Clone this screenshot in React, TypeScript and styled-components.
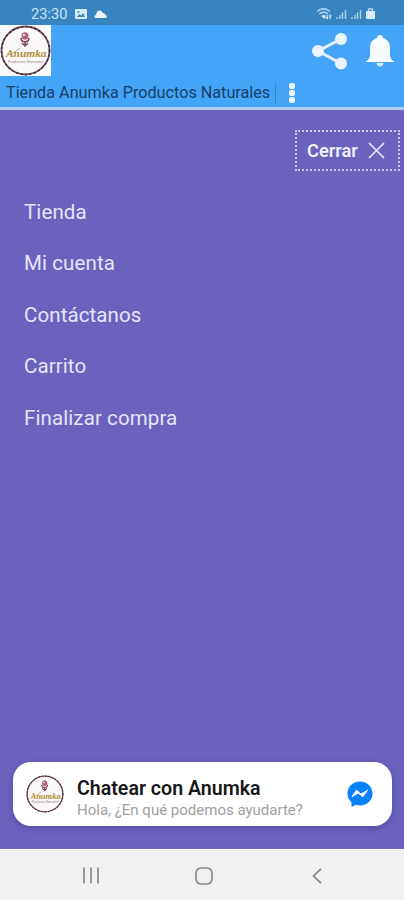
import React from "react";
import styled, { createGlobalStyle } from "styled-components";

const GlobalStyle = createGlobalStyle`
  * { box-sizing: border-box; }
  body { margin: 0; background: #6b62be; font-family: Roboto, sans-serif; }
  button { font-family: inherit; cursor: pointer; }
  svg { display: block; flex: none; }
`;

const Screen = styled.div`
  width: 404px;
  height: 900px;
  display: flex;
  flex-direction: column;
  overflow: hidden;
  background: #6b62be;
`;

const StatusBar = styled.div`
  height: 25px;
  flex: none;
  display: flex;
  align-items: center;
  justify-content: space-between;
  padding: 2px 29px 0 31px;
  background: #3784c0;
  color: #c5e4f8;
`;

const StatusGroup = styled.div<{ $gap: number }>`
  display: flex;
  align-items: center;
  gap: ${(p) => p.$gap}px;
`;

const Clock = styled.span`
  font-size: 14.6px;
  line-height: 18px;
  width: 37px;
  white-space: nowrap;
`;

const Header = styled.header`
  height: 85px;
  flex: none;
  background: #44a5f8;
  border-bottom: 3px solid #b1cdf0;
`;

const HeaderTop = styled.div`
  height: 52px;
  display: flex;
  align-items: center;
  justify-content: space-between;
  padding-right: 10px;
`;

const LogoTile = styled.div`
  width: 51px;
  height: 51px;
  align-self: flex-start;
  background: #fbfafb;
`;

const HeaderActions = styled.div`
  display: flex;
  align-items: center;
  gap: 18px;
`;

const TitleRow = styled.div`
  display: flex;
  align-items: center;
  height: 32px;
  padding-left: 6px;
`;

const Title = styled.h1`
  margin: 0;
  width: 269px;
  font-size: 16.2px;
  font-weight: 400;
  line-height: 20px;
  white-space: nowrap;
  color: #173f67;
`;

const Divider = styled.span`
  width: 1px;
  height: 19px;
  background: #3b84c2;
`;

const Dots = styled.div`
  display: flex;
  flex-direction: column;
  gap: 1px;
  margin-left: 13px;
`;

const Dot = styled.span`
  width: 6px;
  height: 6px;
  border-radius: 2px;
  background: #eef5fc;
`;

const Drawer = styled.main`
  flex: 1;
  display: flex;
  flex-direction: column;
`;

const CloseButton = styled.button`
  align-self: flex-end;
  display: flex;
  align-items: center;
  gap: 10px;
  width: 105px;
  height: 41px;
  margin: 20px 4px 0 0;
  padding: 0 0 0 10px;
  border: 2px dotted #cbc8ec;
  background: transparent;
  color: #f1effc;
  font-size: 18.2px;
  font-weight: 600;
`;

const CloseLabel = styled.span`
  width: 51px;
  white-space: nowrap;
`;

const Menu = styled.nav`
  display: flex;
  flex-direction: column;
  padding: 15px 24px 0;
`;

const MenuItem = styled.a`
  height: 51.5px;
  display: flex;
  align-items: center;
  font-size: 20.5px;
  letter-spacing: 0.1px;
  color: #e7e4fa;
`;

const ChatCard = styled.section`
  display: flex;
  align-items: center;
  height: 64px;
  margin: auto 12px 23px 13px;
  padding: 0 19px 0 13px;
  border-radius: 18px;
  background: #fff;
  box-shadow: 0 2px 6px rgba(45, 35, 120, 0.35);
`;

const ChatText = styled.div`
  flex: 1;
  margin-left: 13px;
  padding-top: 9px;
  white-space: nowrap;
`;

const ChatTitle = styled.div`
  font-size: 19.6px;
  font-weight: 600;
  line-height: 22px;
  color: #171719;
`;

const ChatMessage = styled.div`
  font-size: 15px;
  line-height: 20px;
  color: #a09fa1;
`;

const NavBar = styled.footer`
  height: 51px;
  flex: none;
  display: grid;
  grid-template-columns: 113px 117px 10px;
  align-items: center;
  padding: 1px 0 0 82px;
  background: #f1f1f1;
  border-top: 1px solid #fafaff;
`;

const LogoWord = styled.text`
  font-family: "Liberation Serif", serif;
  font-style: italic;
  font-weight: 700;
  font-size: 11.4px;
`;

const LogoTagline = styled.text`
  font-family: Roboto, sans-serif;
  font-size: 3.9px;
`;

function BrandLogo({ size }: { size: number }) {
  return (
    <svg width={size} height={size} viewBox="0 0 51 51">
      <circle cx="25.5" cy="25.5" r="24" fill="#fbf9fa" stroke="#714a5c" strokeWidth="1.8" />
      <circle cx="25.5" cy="25.5" r="24" fill="none" stroke="#3d2535" strokeWidth="1.4" strokeDasharray="2 2.5" />
      <ellipse cx="25" cy="11" rx="3.5" ry="3.8" fill="#ad6579" />
      <path d="M21 13c0 5 8 5 8 0M25 16v5M22 18l3 3 3-3" fill="none" stroke="#82405c" strokeWidth="1.5" />
      <circle cx="24" cy="10" r="1.2" fill="#ead0d6" />
      <LogoWord x="6" y="32" fill="#b08d35">Anumka</LogoWord>
      <path d="M8 30c6-2 9-5 12-7" fill="none" stroke="#bc9960" strokeWidth="1" />
      <LogoTagline x="8" y="38" fill="#9b858b">Productos Naturales</LogoTagline>
    </svg>
  );
}

function PictureIcon() {
  return (
    <svg width="12" height="10" viewBox="0 0 12 10">
      <rect width="12" height="10" rx="1" fill="#d5edfa" />
      <path d="M2 8l2.5-3 1.7 1.6L8 4l2 4z" fill="#3c86bd" />
      <circle cx="3.5" cy="3" r="1" fill="#3c86bd" />
    </svg>
  );
}

function CloudIcon() {
  return (
    <svg width="13" height="8" viewBox="0 0 13 8">
      <path d="M1.5 8C0 8 0 5 2 5 2.5 0 7.5-.8 8.5 3c2-.4 2.5.5 3 2 2 .4 1.8 3 0 3z" fill="#e6f5fd" />
    </svg>
  );
}

function WifiIcon() {
  return (
    <svg width="16" height="12" viewBox="0 0 16 12">
      <path d="M1 3.5c4-3.3 9-3.3 13 0M3.2 6c3-2.4 6-2.4 8.8 0M5.5 8.4c1.4-1.2 2.8-1.2 4.2 0" fill="none" stroke="#aad5ed" strokeWidth="1.6" />
      <path d="M8.500 11l-3-2.500c1.300-1 2.700-1 4.500 0z" fill="#bfe1f3" />
      <path d="M11.500 7v4M10 9.500l1.500 1.500M14 11V7l1.300 1.500" fill="none" stroke="#c7e6f5" strokeWidth="1.2" />
    </svg>
  );
}

function SignalIcon() {
  return (
    <svg width="11" height="10" viewBox="0 0 11 10">
      <path d="M1 10V8M4 10V6M6.5 10V3.5M9.5 10V1" stroke="#a9d3ec" strokeWidth="1.4" />
    </svg>
  );
}

function BatteryIcon() {
  return (
    <svg width="9" height="11" viewBox="0 0 9 11">
      <path d="M2.5 4V1h4v3" fill="none" stroke="#b4d7e9" strokeWidth="1.3" />
      <rect y="3" width="9" height="8" rx="1" fill="#d9edf5" />
    </svg>
  );
}

function ShareIcon() {
  return (
    <svg width="36" height="38" viewBox="0 0 36 38">
      <path d="M29 7L6 19l23 12.5" fill="none" stroke="#e2f1fd" strokeWidth="3" />
      <circle cx="29" cy="7" r="6" fill="#e9f4fd" />
      <circle cx="6" cy="19" r="6" fill="#e9f4fd" />
      <circle cx="29" cy="31.5" r="6" fill="#e9f4fd" />
    </svg>
  );
}

function BellIcon() {
  return (
    <svg width="28" height="32" viewBox="0 0 28 32">
      <path d="M14 0c-2 0-3 1.2-2.8 3C6.500 4.300 4 8 4 13v7c0 3-1.200 5-4 6.500V27h28v-.5c-2.800-1.500-4-3.500-4-6.500v-7c0-5-2.500-8.700-7.200-10C17 1.200 16 0 14 0z" fill="#f9fcff" />
      <path d="M10.500 28h7c-.5 4.500-6.500 4.500-7 0z" fill="#deeffb" />
    </svg>
  );
}

function CloseIcon() {
  return (
    <svg width="17" height="17" viewBox="0 0 17 17">
      <path d="M1 1l15 15M16 1L1 16" stroke="#e9e6fa" strokeWidth="1.7" />
    </svg>
  );
}

function MessengerIcon() {
  return (
    <svg width="26" height="26" viewBox="0 0 26 26">
      <path d="M13 .5C5.800.5.500 5.700.500 12.500c0 3.700 1.500 6.700 4 8.900V26l4.300-2.300c1.300.5 2.700.8 4.200.8 7.200 0 12.500-5.200 12.500-12S20.200.5 13 .5z" fill="#0882fa" />
      <path d="M5 15.500l4.500-6.300 4.500 3.800 6.500-3.700-4.700 6.500-4.600-3.700z" fill="#fff" stroke="#fff" strokeWidth="1" strokeLinejoin="round" />
    </svg>
  );
}

function RecentsIcon() {
  return (
    <svg width="18" height="17" viewBox="0 0 18 17">
      <path d="M2 .5v16M9 .5v16M16 .5v16" stroke="#919191" strokeWidth="1.8" />
    </svg>
  );
}

function HomeIcon() {
  return (
    <svg width="18" height="18" viewBox="0 0 18 18">
      <rect x="1" y="1" width="16" height="16" rx="5" fill="none" stroke="#898989" strokeWidth="1.700" />
    </svg>
  );
}

function BackIcon() {
  return (
    <svg width="10" height="16" viewBox="0 0 10 16">
      <path d="M9 .8L1.500 8 9 15.200" fill="none" stroke="#858585" strokeWidth="1.700" />
    </svg>
  );
}

const menuItems = ["Tienda", "Mi cuenta", "Contáctanos", "Carrito", "Finalizar compra"];

export default function App() {
  return (
    <>
      <GlobalStyle />
      <Screen>
        <StatusBar>
          <StatusGroup $gap={7}>
            <Clock>23:30</Clock>
            <PictureIcon />
            <CloudIcon />
          </StatusGroup>
          <StatusGroup $gap={4}>
            <WifiIcon />
            <SignalIcon />
            <SignalIcon />
            <BatteryIcon />
          </StatusGroup>
        </StatusBar>
        <Header>
          <HeaderTop>
            <LogoTile><BrandLogo size={51} /></LogoTile>
            <HeaderActions><ShareIcon /><BellIcon /></HeaderActions>
          </HeaderTop>
          <TitleRow>
            <Title>Tienda Anumka Productos Naturales</Title>
            <Divider />
            <Dots><Dot /><Dot /><Dot /></Dots>
          </TitleRow>
        </Header>
        <Drawer>
          <CloseButton>
            <CloseLabel>Cerrar</CloseLabel>
            <CloseIcon />
          </CloseButton>
          <Menu>
            {menuItems.map((item) => <MenuItem key={item}>{item}</MenuItem>)}
          </Menu>
          <ChatCard>
            <BrandLogo size={38} />
            <ChatText>
              <ChatTitle>Chatear con Anumka</ChatTitle>
              <ChatMessage>Hola, ¿En qué podemos ayudarte?</ChatMessage>
            </ChatText>
            <MessengerIcon />
          </ChatCard>
        </Drawer>
        <NavBar><RecentsIcon /><HomeIcon /><BackIcon /></NavBar>
      </Screen>
    </>
  );
}
